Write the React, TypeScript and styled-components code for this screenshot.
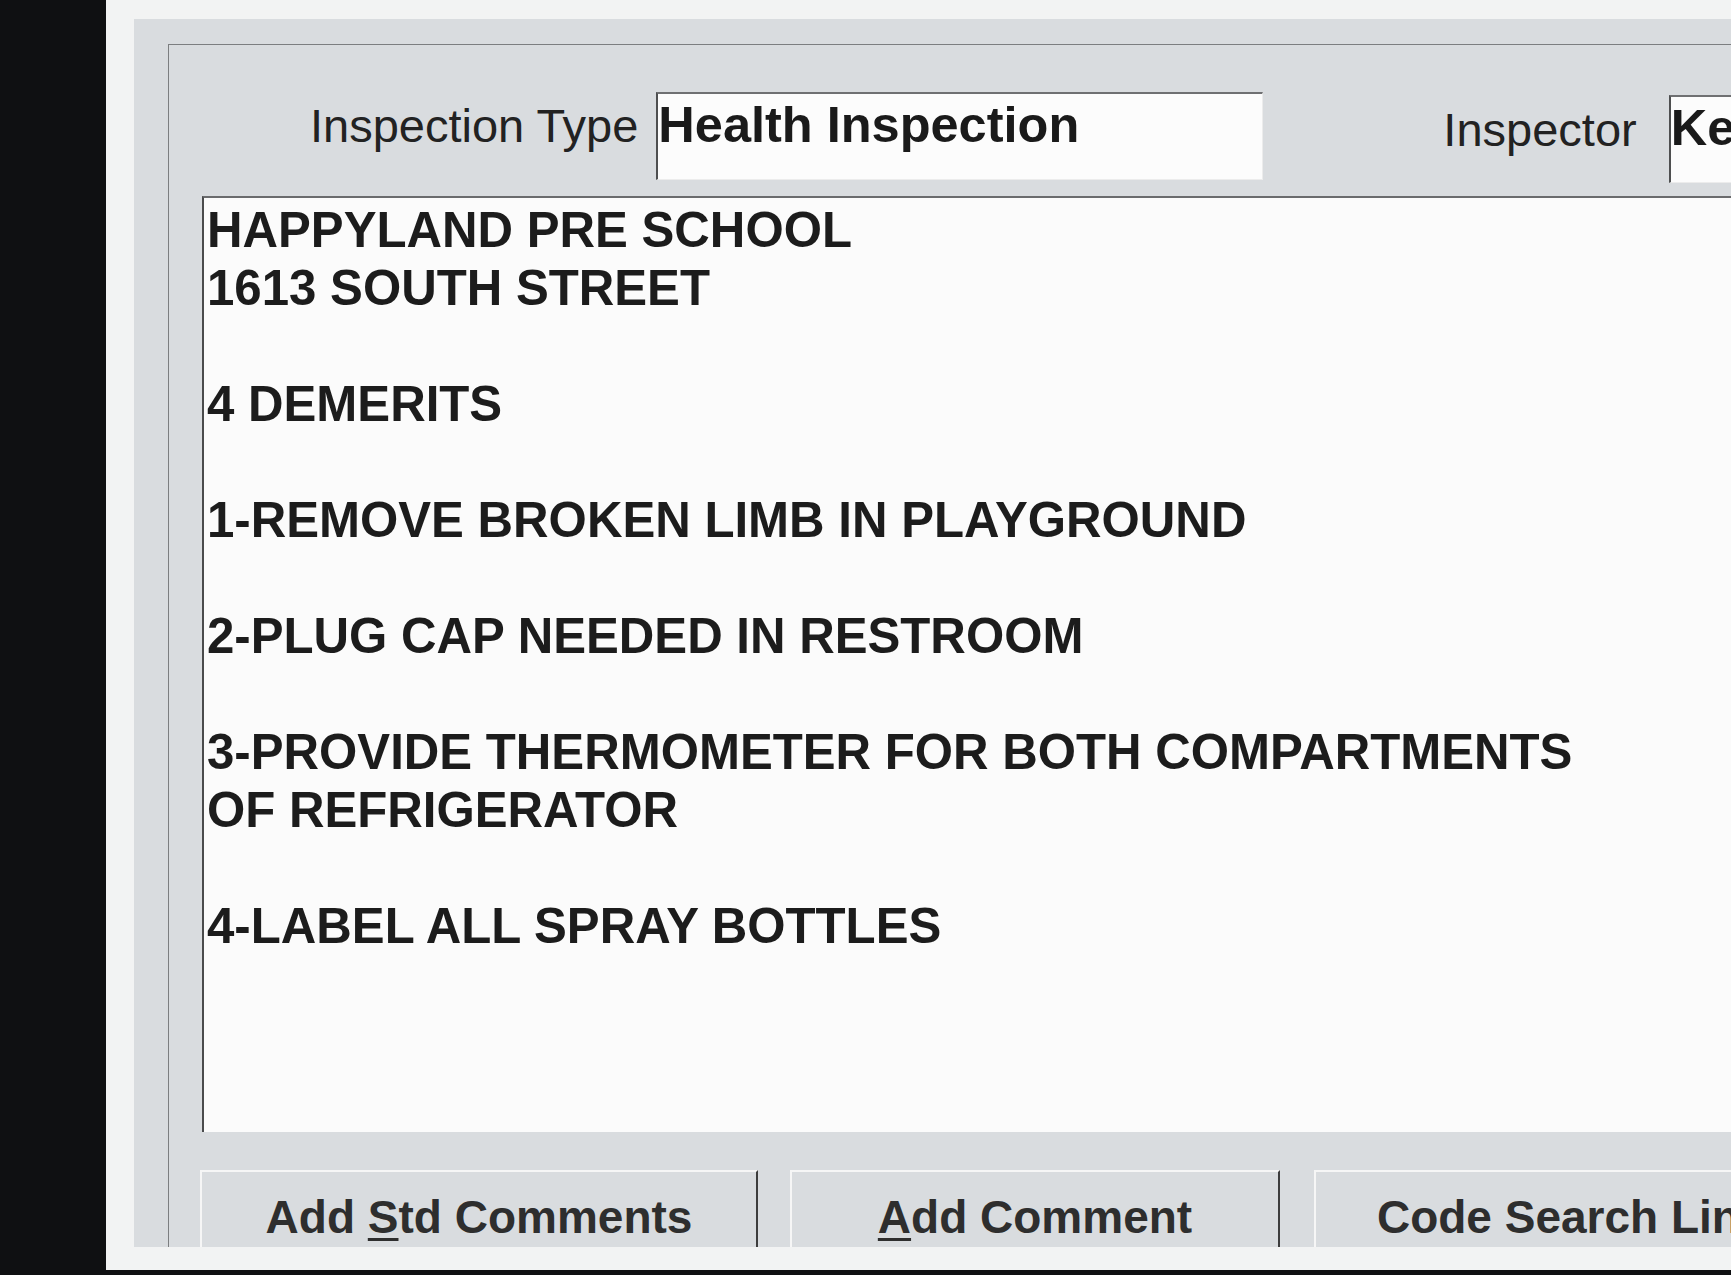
import styled, { createGlobalStyle } from "styled-components";

const GlobalStyle = createGlobalStyle`
  html, body {
    margin: 0;
    padding: 0;
    background: #0f1012;
    overflow: hidden;
  }
  #root {
    width: 1731px;
    height: 1275px;
  }
`;

const Sheet = styled.div`
  display: grid;
  grid-template-columns: 106px 1fr;
  grid-template-rows: 1270px 5px;
  width: 1731px;
  height: 1275px;
  background: #0f1012;
  font-family: "Liberation Sans", Arial, sans-serif;
`;

const Paper = styled.div`
  grid-column: 2;
  grid-row: 1;
  background: #f2f3f3;
  padding: 19px 0 23px 28px;
  box-sizing: border-box;
  overflow: hidden;
`;

const Panel = styled.div`
  width: 2000px;
  height: 100%;
  background: #d9dcdf;
  padding: 25px 0 0 34px;
  box-sizing: border-box;
  overflow: hidden;
`;

const Frame = styled.div`
  height: 100%;
  border-left: 1px solid #7c7e80;
  border-top: 1px solid #7c7e80;
  padding-left: 33px;
  box-sizing: border-box;
`;

const Header = styled.div`
  display: flex;
  align-items: flex-start;
  height: 151px;
  padding: 47px 0 0 108px;
  box-sizing: border-box;
`;

const FieldLabel = styled.span<{ $top: number; $left?: number }>`
  font-size: 47px;
  line-height: 1;
  color: #222;
  margin-top: ${(p) => p.$top}px;
  margin-left: ${(p) => p.$left ?? 0}px;
  white-space: nowrap;
`;

const Field = styled.div<{ $width: number; $top: number; $left: number }>`
  width: ${(p) => p.$width}px;
  height: 88px;
  margin-top: ${(p) => p.$top}px;
  margin-left: ${(p) => p.$left}px;
  background: #fcfcfc;
  border-top: 2px solid #6f7072;
  border-left: 2px solid #4e4f50;
  border-right: 1px solid #ececec;
  border-bottom: 1px solid #ececec;
  padding-top: 6px;
  box-sizing: border-box;
  font-size: 50.5px;
  font-weight: 700;
  line-height: 1;
  color: #1a1a1a;
  white-space: nowrap;
  overflow: hidden;
`;

const Notes = styled.div`
  height: 936px;
  background: #fbfbfb;
  border-top: 2px solid #6a6b6d;
  border-left: 2px solid #4a4b4c;
  padding: 3px 0 0 3px;
  box-sizing: border-box;
  font-size: 49.2px;
  font-weight: 700;
  line-height: 58px;
  color: #1c1c1c;
  white-space: pre;
`;

const ButtonRow = styled.div`
  display: flex;
  margin: 38px 0 0 -2px;
`;

const ActionButton = styled.div<{ $width: number; $gap: number }>`
  width: ${(p) => p.$width}px;
  height: 110px;
  margin-right: ${(p) => p.$gap}px;
  background: #d9dcdf;
  border-top: 2px solid #f6f6f6;
  border-left: 2px solid #f6f6f6;
  border-right: 2px solid #3d3d3d;
  padding-top: 22px;
  box-sizing: border-box;
  font-size: 46px;
  font-weight: 700;
  line-height: 1;
  color: #2e2e2e;
  text-align: center;
  white-space: nowrap;

  u {
    text-decoration-thickness: 3px;
    text-underline-offset: 5px;
  }
`;

const noteLines = [
  "HAPPYLAND PRE SCHOOL",
  "1613 SOUTH STREET",
  "",
  "4 DEMERITS",
  "",
  "1-REMOVE BROKEN LIMB IN PLAYGROUND",
  "",
  "2-PLUG CAP NEEDED IN RESTROOM",
  "",
  "3-PROVIDE THERMOMETER FOR BOTH COMPARTMENTS",
  "OF REFRIGERATOR",
  "",
  "4-LABEL ALL SPRAY BOTTLES",
];

export default function App() {
  return (
    <>
      <GlobalStyle />
      <Sheet>
        <Paper>
          <Panel>
            <Frame>
              <Header>
                <FieldLabel $top={10}>Inspection Type</FieldLabel>
                <Field $width={607} $top={0} $left={18}>
                  Health Inspection
                </Field>
                <FieldLabel $top={14} $left={180}>
                  Inspector
                </FieldLabel>
                <Field $width={400} $top={3} $left={32}>
                  Ke
                </Field>
              </Header>
              <Notes>{noteLines.join("\n")}</Notes>
              <ButtonRow>
                <ActionButton $width={558} $gap={32}>
                  Add <u>S</u>td Comments
                </ActionButton>
                <ActionButton $width={490} $gap={34}>
                  <u>A</u>dd Comment
                </ActionButton>
                <ActionButton $width={540} $gap={0}>
                  Code Search Links
                </ActionButton>
              </ButtonRow>
            </Frame>
          </Panel>
        </Paper>
      </Sheet>
    </>
  );
}
